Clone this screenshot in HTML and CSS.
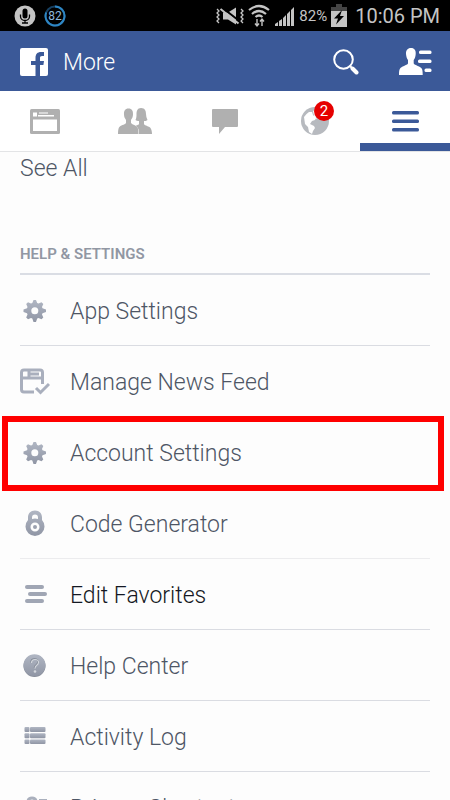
FILE: index.html
```html
<!DOCTYPE html>
<html lang="en">
<head>
<meta charset="utf-8">
<meta name="viewport" content="width=device-width, initial-scale=1">
<title>More</title>
<link rel="stylesheet" href="styles.css">
</head>
<body>
<svg class="defs" aria-hidden="true">
  <defs>
    <linearGradient id="steel" x1="0" y1="0" x2="0" y2="1">
      <stop offset="0" stop-color="#b0b6c3"/><stop offset="1" stop-color="#9096a5"/>
    </linearGradient>
    <symbol id="gear" viewBox="0 0 30 30">
      <path fill="url(#steel)" fill-rule="evenodd" d="M12.300 7 13.500 4h2.500l1.200 3 1.300.5 3-1.300 1.800 1.800-1.300 3 .5 1.200 3.500 1.300v2.500l-3.500 1.300-.5 1.200 1.300 3-1.800 1.800-3-1.300-1.300.5-1.200 3.500h-2.500l-1.200-3.500-1.300-.5-3 1.300-1.800-1.800 1.300-3-.5-1.200L3.500 16v-2.500L7 12.200 7.500 11l-1.300-3L8 6.200l3 1.300zM14.800 11.300a3.500 3.500 0 1 0 0 7 3.500 3.500 0 0 0 0-7z"/>
    </symbol>
  </defs>
</svg>

<div class="status">
  <div class="status-group">
    <svg width="22" height="22" viewBox="0 0 22 22" role="img" aria-label="Voice"><circle cx="11" cy="11" r="10.500" fill="#c4c4c4"/><rect x="8.500" y="3.500" width="5" height="10" rx="2.500"/><path d="M6.500 9.500v2a4.500 4 0 0 0 9 0v-2M11 15.500v2.500M8 18h6" fill="none" stroke="#000" stroke-width="1.300"/></svg>
    <span class="level">82<svg class="level-ring" viewBox="0 0 22 22" aria-hidden="true"><circle cx="11" cy="11" r="9.500" fill="none" stroke="#174061" stroke-width="2"/><path d="M11 1.500A9.500 9.500 0 1 1 2.200 7.500" fill="none" stroke="#2e86c4" stroke-width="2"/></svg></span>
  </div>
  <div class="status-group status-right">
    <svg width="29" height="20" viewBox="0 0 29 20" fill="none" stroke="#c4c4c4" role="img" aria-label="Muted"><path d="M2 3l2 2-2 2 2 2-2 2 2 2-2 2 2 2M26 3l2 2-2 2 2 2-2 2 2 2-2 2 2 2" stroke-width="1.300"/><path d="M8 6.500h5l8-5v17l-8-5H8z" fill="#c4c4c4" stroke="none"/><path d="M7 1.500l18 14" stroke="#000" stroke-width="2"/><path d="M5.500 3l18 14.500" stroke-width="2"/></svg>
    <svg width="22" height="24" viewBox="0 0 22 24" fill="none" stroke="#c4c4c4" role="img" aria-label="Wi-Fi"><path d="M1 6q10-8 20 0M4 10q7-6 14 0M7.500 13q3.500-3 7 0" stroke-width="2.200"/><path d="M9 15v7m-2-2.500 2 2.500 2-2.500M14 22v-7m-2 2.500 2-2.500 2 2.500" stroke-width="1.400"/></svg>
    <svg width="21" height="20" viewBox="0 0 21 20" fill="#c4c4c4" role="img" aria-label="Signal"><path d="M1 20v-2l3-2v4zM5 15l3-2v7H5zM9 12l3-3v11H9zM13 8l3-3v15h-3zM17 4l3-3v19h-3z"/></svg>
    <span class="percent">82%</span>
    <svg width="16" height="23" viewBox="0 0 16 23" role="img" aria-label="Charging"><path d="M5 0h6v3h5v4H0V3h5z" fill="#444"/><path d="M0 7h16v16H0z" fill="#c4c4c4"/><path d="M11 6 3 14.500h4l-2 6 8-8.500H9z"/></svg>
    <span class="clock">10:06 PM</span>
  </div>
</div>

<header class="appbar">
  <svg width="28" height="28" viewBox="0 0 28 28" role="img" aria-label="Home"><rect width="28" height="28" rx="2" fill="#fff"/><path d="M15.500 28V17H11v-4h4.500v-3c0-4 2-6 5.500-6h3v4h-2c-1.500 0-2 .8-2 2v3h4l-.6 4H20v11z" fill="#3b5998"/></svg>
  <h1>More</h1>
  <button class="plain" aria-label="Search"><svg width="26" height="26" viewBox="0 0 26 26" fill="none" stroke="#fff" stroke-linecap="round"><circle cx="10.500" cy="10.500" r="9.300" stroke-width="2"/><path d="m17 17 2 2" stroke-width="2"/><path d="m19.500 19.500 4 4" stroke-width="4"/></svg></button>
  <button class="plain" aria-label="Contacts"><svg width="33" height="28" viewBox="0 0 33 28" fill="#fff"><path d="M12 0c3.500 0 5 2.500 4.700 6-.2 3-1 5-2 6v3.500c1 2 7 2.500 8.300 5.500.6 1.500.7 4 .7 6H0c0-2 0-4.500.8-6 1.400-3 7.200-3.500 8.200-5.500V12C8 11 7.300 9 7 6 6.800 2.500 8.500 0 12 0z"/><rect x="20" y="2.500" width="12.500" height="3.500" rx="1.500"/><rect x="19" y="11.500" width="13.500" height="3.500" rx="1.500"/><rect x="25.500" y="20.500" width="7" height="3.500" rx="1.500"/></svg></button>
</header>

<nav class="tabs">
  <a href="#feed" aria-label="News Feed"><svg width="30" height="25" viewBox="0 0 30 25"><rect width="30" height="25" rx="1.500" fill="#b0b0b0"/><path d="M3 3.500h4v4H3zM9 3.500h9v1H9zM8 6h16v1.500H8zM3 10.500h24V22H3z" fill="#fff"/></svg></a>
  <a href="#friends" aria-label="Friends"><svg width="34" height="26" viewBox="0 0 34 26" fill="#b0b0b0"><path d="M23 0c4 0 5 3 5 6 0 2 .5 4 1.500 6-1 1-2.500 1-3.500 1v3c1 2 5 2 6.500 4 1 1.500 1.500 4 1.500 6H21c0-4-.5-6-2.500-7.500l-.500-1c1.500-.5 3-.8 3-1.500v-3c-1.500 0-2.500-.3-3.500-1 1-2 1-4 1-6 0-3 1-6 4.500-6z"/><path d="M10.500.5c3.500 0 4.700 2.500 4.500 6-.1 2.500-1 4-2 5.500v3c1.500 2 5 2 6.500 4.500.8 1.500 1 4 1 6.500H0c0-2.500.2-5 1-6.500C2.500 17 6.500 17 8 15v-3C7 10.500 6 9 6 6.500 5.800 3 7 .5 10.500.5z"/></svg></a>
  <a href="#messages" aria-label="Messages"><svg width="26" height="25" viewBox="0 0 26 25"><path d="M1 0h24q1 0 1 1v16q0 1-1 1H13l-6 7v-7H1q-1 0-1-1V1q0-1 1-1z" fill="#b0b0b0"/></svg></a>
  <a href="#notifications" aria-label="Notifications"><span class="globe"><svg width="28" height="28" viewBox="0 0 28 28"><circle cx="14" cy="14" r="14" fill="#b7babf"/><path d="M3 10q2-3 5-5l3 0 1 3 3 3-1 2-3 1-2 3 4 2 1 2-2 3-1 3-3-2-1-5-3-3zM12 4l4-2 6 2 2 5-4 4-3-2-3 1-1-4z" fill="#fff"/><path d="m14 5 4 6-3 0z" fill="#b7babf"/></svg><span class="badge">2</span></span></a>
  <a href="#more" class="active" aria-label="More" aria-current="page"><svg width="27" height="21" viewBox="0 0 27 21" fill="#3b5998"><rect width="27" height="3.500" rx="1.500"/><rect y="8.500" width="27" height="3.500" rx="1.500"/><rect y="17" width="27" height="3.500" rx="1.500"/></svg></a>
</nav>

<main>
  <a class="see-all" href="#all">See All</a>
  <h2>HELP &amp; SETTINGS</h2>
  <ul class="menu">
    <li><a href="#app"><svg class="icon"><use href="#gear"/></svg>App Settings</a></li>
    <li><a href="#manage"><svg class="icon" viewBox="0 0 30 30"><path d="M14 25H4q-2.500 0-2.500-2.500v-17Q1.500 3 4 3h16q2.500 0 2.500 2.500V17M2 11h20M9 4v6M10 7h9" fill="none" stroke="#a9afbd" stroke-width="3"/><path d="m16 21 4.500 4.500L29 17" fill="none" stroke="#a9afbd" stroke-width="3"/></svg>Manage News Feed</a></li>
    <li class="highlight"><a href="#account"><svg class="icon"><use href="#gear"/></svg>Account Settings</a></li>
    <li class="faint"><a href="#code"><svg class="icon" viewBox="0 0 30 30"><path fill="url(#steel)" fill-rule="evenodd" d="M15 1.500c4.500 0 7 3 7 7V11a9.500 9.500 0 1 1-14 0V8.500c0-4 2.500-7 7-7zm0 4c-2 0-3 1.200-3 3V10q3-1 6 0V8.500c0-1.800-1-3-3-3zm0 8a4.500 4.500 0 1 0 0 9 4.500 4.500 0 0 0 0-9z"/><circle cx="15" cy="18" r="2" fill="#9ba1af"/></svg>Code Generator</a></li>
    <li class="strong"><a href="#favorites"><svg class="icon" viewBox="0 0 30 30"><g fill="#a0a6b4"><rect x="5" y="5" width="19" height="4" rx="2"/><rect x="8" y="12" width="19" height="4" rx="2"/><rect x="5" y="19" width="19" height="4" rx="2"/></g></svg>Edit Favorites</a></li>
    <li><a href="#help"><svg class="icon" viewBox="0 0 30 30"><circle cx="14.500" cy="15" r="11" fill="#868c98"/><circle cx="14.500" cy="14.300" r="11" fill="url(#steel)"/><path d="M11 11.500q0-3.500 3.500-3.500t3.500 3q0 1.500-2 3-1.500 1-1.500 3" fill="none" stroke="#7f8693" stroke-width="1.500"/><path d="M11.500 12q0-3.500 3.500-3.500t3.500 3q0 1.500-2 3-1.500 1-1.500 3" fill="none" stroke="#d4d7dd" stroke-width="1.200"/><circle cx="15" cy="20.500" r="1.300" fill="#d4d7dd"/></svg>Help Center</a></li>
    <li><a href="#activity"><svg class="icon" viewBox="0 0 30 30"><g fill="url(#steel)"><rect x="4.500" y="5" width="5" height="5" rx="1"/><rect x="10" y="5" width="15.500" height="5" rx="1"/><rect x="4.500" y="11.200" width="5" height="5" rx="1"/><rect x="10" y="11.200" width="15.500" height="5" rx="1"/><rect x="4.500" y="17.500" width="5" height="4.500" rx="1"/><rect x="10" y="17.500" width="15.500" height="4.500" rx="1"/></g></svg>Activity Log</a></li>
    <li><a href="#privacy"><svg class="icon" viewBox="0 0 30 30"><path d="M8 13V9q0-4 4-4t4 4v4" fill="none" stroke="#aab0bd" stroke-width="3"/><path d="M5 13h14v12H5zM19 6h8v3h-8zM21 14h6v3h-6zM21 21h6v3h-6z" fill="#aab0bd"/></svg>Privacy Shortcuts</a></li>
  </ul>
</main>
</body>
</html>
```
FILE: styles.css
```css
* { box-sizing: border-box; }

body {
  margin: 0;
  height: 100vh;
  overflow: hidden;
  background: #fdfdfd;
  color: #4e5665;
  font-family: Roboto, "Liberation Sans", sans-serif;
}

a { color: inherit; text-decoration: none; }
svg { display: block; flex: none; }
.defs { position: absolute; width: 0; height: 0; }

.status {
  display: flex;
  justify-content: space-between;
  height: 31px;
  padding: 0 10px 0 14px;
  background: #000;
  color: #c4c4c4;
}

.status-group { display: flex; align-items: center; gap: 8px; }
.status-right { gap: 4px; }

.level {
  position: relative;
  width: 22px;
  color: #8fb9dc;
  font-size: 12px;
  line-height: 22px;
  text-align: center;
}
.level-ring { position: absolute; inset: 0; }

.percent { font-size: 15px; }
.clock { margin-left: 4px; font-size: 20px; }

.appbar {
  display: flex;
  align-items: center;
  height: 60px;
  padding: 2px 18px 0 20px;
  background: #3b5998;
  color: #fff;
}
.appbar h1 {
  flex: 1;
  margin: 0 0 0 15px;
  font-size: 23px;
  font-weight: 350;
}
.plain {
  padding: 0;
  border: 0;
  background: none;
}
.plain + .plain { margin-left: 40px; }

.tabs {
  display: grid;
  grid-template-columns: repeat(5, 1fr);
  height: 61px;
  border-bottom: 1px solid #e3e4e6;
  background: #fff;
}
.tabs a {
  display: flex;
  align-items: center;
  justify-content: center;
}
.tabs .active {
  border-top: 8px solid transparent;
  border-bottom: 8px solid #3b5998;
}
.globe { position: relative; }
.badge {
  position: absolute;
  top: -6px;
  right: -5px;
  width: 20px;
  height: 20px;
  border-radius: 50%;
  background: #e60000;
  color: #fff;
  font-size: 15px;
  line-height: 20px;
  text-align: center;
}

main { padding: 0 20px; }
.see-all {
  display: block;
  padding-top: 2px;
  font-size: 23px;
  font-weight: 350;
  line-height: 30px;
}
h2 {
  margin: 61px 0 0;
  padding-bottom: 10px;
  border-bottom: 2px solid #dadde4;
  color: #9197a3;
  font-size: 15px;
  font-weight: 600;
  line-height: 18px;
}

.menu { margin: 0; padding: 0; list-style: none; }
.menu li {
  position: relative;
  height: 71px;
  border-bottom: 1px solid #dadce2;
}
.menu a {
  display: flex;
  align-items: center;
  gap: 20px;
  height: 100%;
  padding-top: 2px;
  font-size: 23px;
  font-weight: 350;
}
.icon { width: 30px; height: 30px; }
.menu .faint { border-color: #ececee; }
.menu .strong { color: #141823; }

.highlight::after {
  content: "";
  position: absolute;
  inset: -1px -14px -4px -18px;
  border: 6px solid #f00;
  pointer-events: none;
}
```
